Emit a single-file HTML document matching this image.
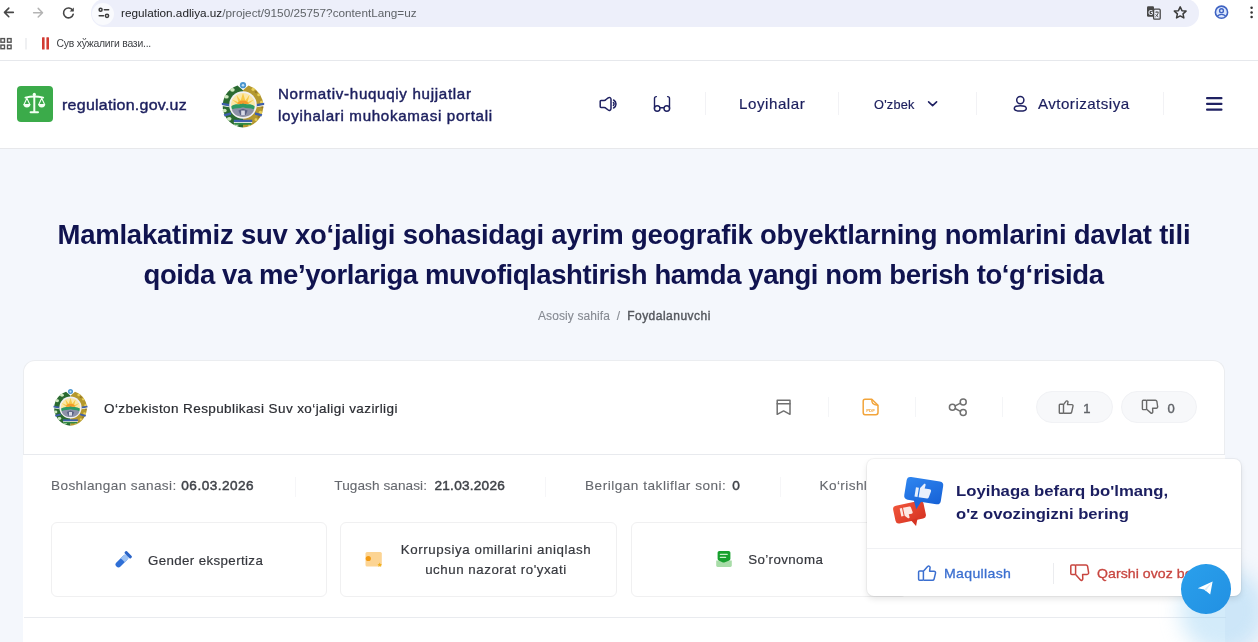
<!DOCTYPE html>
<html><head><meta charset="utf-8">
<style>
*{box-sizing:border-box;margin:0;padding:0}
html,body{width:1258px;height:642px;overflow:hidden}
body{font-family:"Liberation Sans",sans-serif;background:#f4f7fc;position:relative}
.abs{position:absolute}
.nw{white-space:nowrap}
#chrome{left:0;top:0;width:1258px;height:61px;background:#fff;border-bottom:1px solid #e6e8ec}
#omni{left:91px;top:-1px;width:1108px;height:27.5px;background:#edeffa;border-radius:13.5px}
#tune{left:92px;top:2.5px;width:22px;height:22px;border-radius:11px;background:#f9fafd}
#url{left:121px;top:6px;font-size:11.75px;color:#5f6368}
#url b{font-weight:400;color:#202124}
#bm{left:56.5px;top:37.8px;font-size:10.4px;letter-spacing:-0.22px;color:#404347}
#hdr{left:0;top:61px;width:1258px;height:88px;background:#fff;border-bottom:1px solid #e7e8eb}
#logo{left:17px;top:86px;width:36px;height:36px;border-radius:4px;background:#3bab4a}
#site{left:62px;top:95.7px;font-size:15.1px;color:#1c1f5e;-webkit-text-stroke:0.4px #1c1f5e;letter-spacing:0.24px;transform:scaleX(1.06);transform-origin:0 0}
#portal{left:277.6px;top:82.6px;font-size:14.3px;color:#1c1f5e;-webkit-text-stroke:0.42px #1c1f5e;line-height:22.5px;transform:scaleX(1.06);transform-origin:0 0}
.navt{font-size:14.3px;color:#1c1f5e;-webkit-text-stroke:0.18px #1c1f5e;transform:scaleX(1.06);transform-origin:0 0}
.vdiv{width:1px;height:23px;background:#f2f2f5;top:92px}
.title{font-size:27.5px;font-weight:700;color:#10134f;line-height:39.5px}
#crumb{left:538px;top:309px;font-size:12px;letter-spacing:0.1px;color:#868a92;-webkit-text-stroke:0.1px #868a92}
#crumb b{color:#55585e;font-weight:400;font-size:12px;letter-spacing:0.48px;-webkit-text-stroke:0.4px #55585e}
#card{left:23px;top:360px;width:1202px;height:95px;background:#fff;border-radius:12px 12px 0 0;border:1px solid #ebedf0;border-bottom:none}
#card2{left:23px;top:455px;width:1202px;height:200px;background:#fff}
#cardhead{left:23px;top:454px;width:1202px;height:1px;background:#e8eaee}
#org{left:104px;top:400.5px;font-size:13.5px;letter-spacing:0.4px;color:#2b2d33;-webkit-text-stroke:0.2px #2b2d33}
.pill{height:32px;border-radius:16px;background:#f7f8fa;border:1px solid #f1f2f5;top:391px}
.pnum{font-size:13px;color:#606368;-webkit-text-stroke:0.4px #606368;top:400.5px}
.lbl{font-size:13.6px;color:#65686e;top:478.4px;-webkit-text-stroke:0.1px #65686e}
.val{font-size:13.6px;font-weight:400;color:#3f4248;-webkit-text-stroke:0.45px #3f4248;top:478.4px}
.cat{top:522px;height:74.5px;border:1px solid #f0f0f1;border-radius:6px;background:#fff}
.catt{font-size:13.3px;color:#36383e;text-align:center;-webkit-text-stroke:0.2px #36383e}
#line617{left:24px;top:617px;width:1202px;height:1px;background:#e9ebef}
#popup{left:866.5px;top:459px;width:374.5px;height:137px;background:#fff;border-radius:7px;box-shadow:0 0 0 1px rgba(0,0,0,.04),0 3px 6px rgba(0,0,0,.1)}
#ptitle{left:956px;top:480px;font-size:15.4px;font-weight:700;color:#1b1e60;line-height:22.5px}
#phr{left:867px;top:548px;width:374px;height:1px;background:#f0f1f4}
#pvd{left:1053px;top:563px;width:1px;height:21px;background:#ebecef}
#maq{left:944.3px;top:566.2px;font-size:13.3px;letter-spacing:0.32px;color:#3b6fd0;-webkit-text-stroke:0.3px #3b6fd0;transform:scaleX(1.06);transform-origin:0 0}
#qar{left:1097px;top:566.2px;font-size:13.3px;letter-spacing:0.05px;color:#c8453f;-webkit-text-stroke:0.3px #c8453f;transform:scaleX(1.06);transform-origin:0 0}
#tg{left:1181px;top:564px;width:49.5px;height:49.5px;border-radius:50%;background:linear-gradient(135deg,#2aa0ec,#2290e2)}
#glow{left:1180px;top:568px;width:86px;height:86px;border-radius:50%;background:rgba(150,208,242,.42);filter:blur(10px)}
html{filter:blur(0.35px)}
</style></head><body>
<svg width="0" height="0" style="position:absolute">
<defs>
 <symbol id="emb" viewBox="0 0 100 100">
  <path d="M50 99A47 47 0 0 1 38 7.5L50 18Z" fill="#2a6a30"/>
  <path d="M50 99A47 47 0 0 0 62 7.5L50 18Z" fill="#b4982e"/>
  <g fill="#cfe8c0">
   <ellipse cx="27" cy="17" rx="5" ry="4"/><ellipse cx="14" cy="32" rx="5" ry="4"/>
   <ellipse cx="10" cy="62" rx="4.5" ry="4"/><ellipse cx="20" cy="80" rx="5" ry="4"/><ellipse cx="36" cy="92" rx="5" ry="3.5"/>
  </g>
  <g fill="#e8cf58">
   <circle cx="72" cy="16" r="3.5"/><circle cx="84" cy="28" r="3"/><circle cx="90" cy="44" r="3"/><circle cx="88" cy="66" r="3.5"/><circle cx="78" cy="82" r="3"/><circle cx="64" cy="93" r="3"/>
  </g>
  <g fill="#7a5c1e" opacity=".5"><circle cx="78" cy="22" r="2.5"/><circle cx="92" cy="55" r="2.5"/><circle cx="84" cy="76" r="2.5"/></g>
  <g fill="#3e5fae">
   <path d="M4 45l17 3v5l-17-3z"/><path d="M96 45l-17 3v5l17-3z"/>
   <path d="M8 70l16-4v5l-14 4z"/><path d="M92 70l-16-4v5l14 4z"/>
  </g>
  <g fill="#f2f4f8"><path d="M4 50l17 3v2l-17-3z"/><path d="M96 50l-17 3v2l17-3z"/></g>
  <circle cx="50" cy="50" r="30" fill="#f0f0f3"/>
  <circle cx="50" cy="50" r="26" fill="#fbe7a6"/>
  <path d="M50 24L55 40L64 28L60 44L74 38L62 48H38L26 38L40 44L36 28L45 40Z" fill="#f7c948"/>
  <path d="M38 48A12 8 0 0 1 62 48Z" fill="#f39a2a"/>
  <path d="M24.5 53C33 46 43 50 50 47C57 50 67 46 75.5 53L74 60H26Z" fill="#2f9a66"/>
  <path d="M26 60C34 56 43 58 50 55C57 58 66 56 74 60C72 70 62 76 50 76C38 76 28 70 26 60Z" fill="#8d91a8"/>
  <path d="M40 62L50 58L60 62L56 72H44Z" fill="#5c6384"/>
  <path d="M46 62h8v10h-8z" fill="#d9dbe6"/>
  <path d="M30 82h40v5H30z" fill="#3e5fae"/>
  <path d="M30 87h40v2H30z" fill="#f0f2f6"/>
  <path d="M32 89h36v4H32z" fill="#2f8a45"/>
  <circle cx="50" cy="7" r="6.8" fill="#4a95cf"/>
  <circle cx="50" cy="7" r="2.8" fill="#c6e2f4"/>
 </symbol>
</defs></svg>
<div id="chrome" class="abs"></div>
<div id="omni" class="abs"></div>
<div id="tune" class="abs"></div>
<svg class="abs" style="left:0;top:0" width="130" height="26" viewBox="0 0 130 26">
 <g fill="none" stroke="#474747" stroke-width="1.6" stroke-linecap="round" stroke-linejoin="round">
  <path d="M13.3 12.4H4.6M8.8 8.1L4.5 12.4L8.8 16.7"/>
 </g>
 <g fill="none" stroke="#b4b4b4" stroke-width="1.5" stroke-linecap="round" stroke-linejoin="round">
  <path d="M33.6 12.7H42.4M38.2 8.4L42.5 12.7L38.2 17"/>
 </g>
 <g fill="none" stroke="#474747" stroke-width="1.6" stroke-linecap="round">
  <path d="M72.6 10.3A4.9 4.9 0 1 0 73.2 14.2"/>
 </g>
 <path d="M73.8 7.4V11.6H69.6Z" fill="#474747"/>
 <g fill="none" stroke="#3c3c3c" stroke-width="1.5" stroke-linecap="round">
  <circle cx="100.6" cy="9.8" r="1.5"/><path d="M104.3 9.8H108.6"/>
  <circle cx="107" cy="15.8" r="1.6"/><path d="M99.2 15.8H103.5"/>
 </g>
</svg>
<div id="url" class="abs nw"><b>regulation.adliya.uz</b>/project/9150/25757?contentLang=uz</div>
<svg class="abs" style="left:1140px;top:0" width="118" height="26" viewBox="1140 0 118 26">
 <rect x="1147" y="6.2" width="7" height="10.5" rx="1.2" fill="#474747"/>
 <text x="1148.2" y="14.6" font-family="Liberation Sans" font-size="6.5" font-weight="700" fill="#edeffa">G</text>
 <rect x="1153.6" y="9.2" width="6.6" height="10" rx="1" fill="#edeffa" stroke="#474747" stroke-width="1.3"/>
 <path d="M1155.3 12.2h3.3M1156.9 11.2v1M1158.3 12.4c-.4 2-1.5 3.5-3 4.6M1155.6 14.3c.7 1 1.6 2 2.7 2.6" stroke="#474747" stroke-width=".9" fill="none"/>
 <path d="M1180.2 6.9l1.75 3.75 4.1.45-3.05 2.8.85 4.05-3.65-2.05-3.65 2.05.85-4.05-3.05-2.8 4.1-.45z" fill="none" stroke="#3c3c3c" stroke-width="1.5" stroke-linejoin="round"/>
 <circle cx="1221.5" cy="12.2" r="6.1" fill="#dce8fd" stroke="#3f63c3" stroke-width="1.6"/>
 <circle cx="1221.5" cy="10.7" r="1.9" fill="none" stroke="#3f63c3" stroke-width="1.4"/>
 <path d="M1217.3 16.3c1.2-1.3 2.5-1.9 4.2-1.9s3 .6 4.2 1.9" fill="none" stroke="#3f63c3" stroke-width="1.4"/>
 <circle cx="1251.6" cy="7.8" r="1.25" fill="#333"/><circle cx="1251.6" cy="12.4" r="1.25" fill="#333"/><circle cx="1251.6" cy="16.9" r="1.25" fill="#333"/>
</svg>
<svg class="abs" style="left:0;top:30px" width="56" height="26" viewBox="0 30 56 26">
 <g fill="none" stroke="#555" stroke-width="1.4">
  <rect x="0.9" y="38.6" width="3.6" height="3.6"/><rect x="7.5" y="38.6" width="3.6" height="3.6"/>
  <rect x="0.9" y="45.1" width="3.6" height="3.6"/><rect x="7.5" y="45.1" width="3.6" height="3.6"/>
 </g>
 <rect x="25.5" y="38" width="1" height="11.5" fill="#dfe1e5"/>
 <rect x="42" y="37.2" width="2.6" height="12.4" rx=".5" fill="#d23b33"/>
 <rect x="46.4" y="37.2" width="2.6" height="12.4" rx=".5" fill="#d23b33"/>
</svg>
<div id="bm" class="abs nw">Сув хўжалиги вази...</div>

<div id="hdr" class="abs"></div>
<div id="logo" class="abs"></div>
<svg class="abs" style="left:17px;top:86px" width="36" height="36" viewBox="17 86 36 36">
 <g fill="none" stroke="#f2fff2" stroke-linecap="round">
  <path d="M25.4 97.6Q34.3 95.4 43.2 97.6" stroke-width="1.9"/>
  <path d="M34.3 95V111.4M30.6 112.3H38" stroke-width="2"/>
  <path d="M26.9 98.2L24 104.4M26.9 98.2L29.8 104.4M41.7 98.2L38.8 104.4M41.7 98.2L44.6 104.4" stroke-width="1.1"/>
 </g>
 <circle cx="34.3" cy="94.4" r="1.6" fill="#f2fff2"/>
 <path d="M23.4 104H30.4A3.5 3.4 0 0 1 23.4 104Z" fill="#f2fff2"/>
 <path d="M38.2 104H45.2A3.5 3.4 0 0 1 38.2 104Z" fill="#f2fff2"/>
</svg>
<div id="site" class="abs nw">regulation.gov.uz</div>
<svg class="abs" style="left:219.5px;top:81.5px" width="46" height="46"><use href="#emb"/></svg>
<div id="portal" class="abs nw"><span style="letter-spacing:0.64px">Normativ-huquqiy hujjatlar</span><br><span style="letter-spacing:0.63px">loyihalari muhokamasi portali</span></div>
<svg class="abs" style="left:590px;top:85px" width="360" height="40" viewBox="590 85 360 40">
 <g fill="none" stroke="#1f2162" stroke-width="1.5" stroke-linejoin="round" stroke-linecap="round">
  <path d="M601 100.4H604.2C605 100.4 605.5 100.1 606 99.5L608.2 97.8C609.4 96.9 611 97.6 611 99.2V108.6C611 110.2 609.4 110.9 608.2 110L606 108.3C605.5 107.7 605 107.4 604.2 107.4H601C600.5 107.4 600.2 107.1 600.2 106.6V101.2C600.2 100.7 600.5 100.4 601 100.4Z"/>
  <path d="M613.4 102.6C614.3 103.3 614.3 104.7 613.4 105.4"/>
  <path d="M613.6 100C616.8 101.8 616.8 106.2 613.6 108"/>
  <path d="M656.4 96.6C655.2 96.6 654.5 97.3 654.5 98.4V108.4M667.6 96.6C668.8 96.6 669.5 97.3 669.5 98.4V108.4" stroke-width="1.4"/>
  <circle cx="657.2" cy="108.5" r="2.8" stroke-width="1.4"/><circle cx="666.8" cy="108.5" r="2.8" stroke-width="1.4"/>
  <path d="M660 107.7H664" stroke-width="1.4"/>
  <path d="M928.6 101.8L932.6 105.6L936.6 101.8" stroke-width="1.6"/>
 </g>
</svg>
<svg class="abs" style="left:1000px;top:85px" width="240" height="40" viewBox="1000 85 240 40">
 <g fill="none" stroke="#1f2162" stroke-width="1.5">
  <circle cx="1020.3" cy="100.1" r="3.6"/>
  <ellipse cx="1020.3" cy="108.4" rx="6" ry="2.6"/>
 </g>
 <g fill="#1f2162">
  <rect x="1206" y="97" width="16.5" height="2.2" rx="1"/>
  <rect x="1206" y="102.8" width="16.5" height="2.2" rx="1"/>
  <rect x="1206" y="108.6" width="16.5" height="2.2" rx="1"/>
 </g>
</svg>
<div class="abs vdiv" style="left:705px"></div>
<div class="abs vdiv" style="left:838px"></div>
<div class="abs vdiv" style="left:976px"></div>
<div class="abs vdiv" style="left:1163px"></div>
<div class="abs nw navt" style="left:738.6px;top:96.3px;letter-spacing:0.5px">Loyihalar</div>
<div class="abs nw navt" style="left:873.5px;top:98px;font-size:12px;letter-spacing:0.22px">O'zbek</div>
<div class="abs nw navt" style="left:1037.5px;top:95.8px;letter-spacing:0.43px">Avtorizatsiya</div>

<div id="t1" class="abs nw title" style="left:57.5px;top:215.2px;letter-spacing:-0.236px">Mamlakatimiz suv xo‘jaligi sohasidagi ayrim geografik obyektlarning nomlarini davlat tili</div>
<div id="t2" class="abs nw title" style="left:143.5px;top:254.9px;letter-spacing:-0.407px">qoida va me’yorlariga muvofiqlashtirish hamda yangi nom berish to‘g‘risida</div>
<div id="crumb" class="abs nw">Asosiy sahifa &nbsp;/&nbsp; <b>Foydalanuvchi</b></div>

<div id="card" class="abs"></div>
<div id="card2" class="abs"></div>
<div id="cardhead" class="abs"></div>
<svg class="abs" style="left:52px;top:389px" width="37" height="37"><use href="#emb"/></svg>
<div id="org" class="abs nw">O‘zbekiston Respublikasi Suv xo‘jaligi vazirligi</div>
<div class="abs pill" style="left:1036px;width:77px"></div>
<div class="abs pill" style="left:1121px;width:76px"></div>
<svg class="abs" style="left:760px;top:385px" width="430" height="45" viewBox="760 385 430 45">
 <g fill="none" stroke="#707070" stroke-width="1.5" stroke-linejoin="round" stroke-linecap="round">
  <path d="M777.2 400.2H790V414.3L783.6 410.9L777.2 414.3Z"/>
  <path d="M777.2 403.8H790"/>
  <circle cx="963.2" cy="401.9" r="3"/><circle cx="952.4" cy="407.2" r="3"/><circle cx="963.2" cy="412.6" r="3"/>
  <path d="M955.1 405.9L960.5 403.2M955.1 408.5L960.5 411.3"/>
 </g>
 <g fill="none" stroke="#f2a43a" stroke-width="1.5" stroke-linejoin="round">
  <path d="M865 399.2H871.8L878 405.2V412.6C878 414 877 414.8 875.8 414.8H865C863.8 414.8 863.2 414 863.2 412.6V401.2C863.2 400 863.8 399.2 865 399.2Z"/>
  <path d="M871.8 399.5C871.8 403 872.6 405 877.8 405.2"/>
 </g>
 <text x="866.2" y="411.6" font-family="Liberation Sans" font-size="4.3" font-weight="700" fill="#f2a43a">PDF</text>
 <g fill="none" stroke="#6a6a6a" stroke-width="1.4" stroke-linejoin="round">
  <rect x="1059.3" y="404.3" width="4.2" height="9" rx=".8"/>
  <path d="M1063.5 404.6L1065.9 401.4C1066.4 400.6 1067.7 400.7 1068 401.8L1067.5 404.6H1071.9C1072.7 404.6 1073.2 405.3 1073 406.1L1071.6 412.3C1071.4 413 1070.9 413.3 1070.2 413.3H1063.5"/>
  <rect x="1142.4" y="400.3" width="4.2" height="9.3" rx=".8"/>
  <path d="M1146.6 400.3H1155.4C1156.2 400.3 1156.7 400.8 1156.9 401.5L1157.6 406.5C1157.8 407.3 1157.2 408.3 1156.3 408.3H1152.6L1152.8 411.8C1152.8 413.1 1151.6 413.6 1150.8 412.9L1146.6 409.2"/>
 </g>
</svg>
<div class="abs" style="left:827.5px;top:397px;width:1px;height:20px;background:#f4f5f7"></div><div class="abs" style="left:914.5px;top:397px;width:1px;height:20px;background:#f4f5f7"></div><div class="abs" style="left:1001.5px;top:397px;width:1px;height:20px;background:#f4f5f7"></div>

<div class="abs nw pnum" style="left:1083.3px">1</div>
<div class="abs nw pnum" style="left:1167.5px">0</div>

<div class="abs nw lbl" style="left:51px;letter-spacing:0.384px">Boshlangan sanasi:</div>
<div class="abs nw val" style="left:181.3px;letter-spacing:0.481px">06.03.2026</div>
<div class="abs" style="left:295px;top:477px;width:1px;height:20px;background:#f6f6f8"></div>
<div class="abs nw lbl" style="left:334.3px;letter-spacing:0.076px">Tugash sanasi:</div>
<div class="abs nw val" style="left:434.5px;letter-spacing:0.247px">21.03.2026</div>
<div class="abs" style="left:545px;top:477px;width:1px;height:20px;background:#f6f6f8"></div>
<div class="abs nw lbl" style="left:585px;letter-spacing:0.508px">Berilgan takliflar soni:</div>
<div class="abs nw val" style="left:732.2px">0</div>
<div class="abs" style="left:780px;top:477px;width:1px;height:20px;background:#f6f6f8"></div>
<div class="abs nw lbl" style="left:819.5px;letter-spacing:0.4px">Ko‘rishlar soni:</div>

<div class="abs cat" style="left:51px;width:276px"></div>
<div class="abs cat" style="left:340px;width:277px"></div>
<div class="abs cat" style="left:631px;width:276px"></div>
<svg class="abs" style="left:110px;top:545px" width="280" height="28" viewBox="110 545 280 28">
 <g transform="rotate(45 123.5 559.5)">
  <rect x="120.6" y="554.5" width="5.8" height="15" rx="2.9" fill="#2f6fd6"/>
  <rect x="120.6" y="554.5" width="5.8" height="6" fill="#9cc2f4"/>
  <rect x="119.2" y="551.3" width="8.6" height="3" rx="1" fill="#2a64c8"/>
 </g>
 <rect x="365.5" y="552" width="16.3" height="14.5" rx="1.5" fill="#fcd493"/>
 <circle cx="368.3" cy="558.5" r="2.6" fill="#f39a12"/>
 <path d="M379.7 562.6l.7 1.4 1.5.2-1.1 1 .3 1.5-1.4-.7-1.4.7.3-1.5-1.1-1 1.5-.2z" fill="#f0b11e"/>
</svg>
<svg class="abs" style="left:712px;top:547px" width="24" height="24" viewBox="712 547 24 24">
 <path d="M716.2 560.4H731.8V565.6C731.8 566.4 731.2 567 730.4 567H717.6C716.8 567 716.2 566.4 716.2 565.6Z" fill="#a8dca8"/>
 <path d="M719.4 551H728.6C729.6 551 730.4 551.8 730.4 552.8V558.8C730.4 559.6 730 560.1 729.3 560.5L724.3 562.4C723.8 562.6 723.4 562.6 722.9 562.4L718.7 560.5C718 560.1 717.6 559.6 717.6 558.8V552.8C717.6 551.8 718.4 551 719.4 551Z" fill="#17a02e"/>
 <path d="M720.4 554.4H727.2M720.4 557.4H725.6" stroke="#c8f0c8" stroke-width="1.3" stroke-linecap="round"/>
</svg>
<div class="abs nw catt" style="left:148px;top:552.6px;letter-spacing:0.384px">Gender ekspertiza</div>
<div class="abs nw catt" style="left:380px;top:540.4px;width:232px;line-height:19.8px"><span style="letter-spacing:0.585px">Korrupsiya omillarini aniqlash</span><br><span style="letter-spacing:0.542px">uchun nazorat ro'yxati</span></div>
<div class="abs nw catt" style="left:748.2px;top:552.3px;letter-spacing:0.405px">So’rovnoma</div>
<div id="line617" class="abs"></div>

<div id="glow" class="abs"></div>
<div id="popup" class="abs"></div>
<svg class="abs" style="left:885px;top:468px" width="65" height="65" viewBox="885 468 65 65">
 <defs>
  <linearGradient id="gb" x1="0" y1="0" x2="1" y2="1"><stop offset="0" stop-color="#2f86f0"/><stop offset="1" stop-color="#1661d6"/></linearGradient>
  <linearGradient id="gr" x1="0" y1="0" x2="1" y2="1"><stop offset="0" stop-color="#f0553a"/><stop offset="1" stop-color="#d63322"/></linearGradient>
 </defs>
 <g transform="rotate(-12 910 512)">
  <rect x="894" y="503" width="31" height="18" rx="3.5" fill="url(#gr)"/>
  <path d="M909 520L913 527L916 520Z" fill="#d63322"/>
  <path d="M904 506.5h6.5c.8 0 1.3.5 1.4 1.2l.7 4.8c.1.8-.5 1.5-1.3 1.5h-3l.2 2.8c0 1-1 1.4-1.7.8L904 514.5z M900.6 506.5h2.4v8h-2.4z" fill="#fde8e2"/>
 </g>
 <g transform="rotate(9 923 492)">
  <rect x="905" y="479" width="37" height="23" rx="4" fill="url(#gb)"/>
  <path d="M915 501L919 510L923 501Z" fill="#1a66da"/>
  <path d="M919.5 488.5l3-4.3c.6-.9 2-.6 2 .5l-.4 3.6h5.2c1 0 1.7.9 1.5 1.9l-1.3 6.4c-.2.7-.8 1.2-1.5 1.2h-8.5z M915.3 488.5h3v9.3h-3z" fill="#e8f0fc"/>
 </g>
</svg>
<div id="ptitle" class="abs nw"><span style="display:inline-block;transform:scaleX(1.087);transform-origin:0 0">Loyihaga befarq bo'lmang,</span><br><span style="display:inline-block;transform:scaleX(1.08);transform-origin:0 0">o'z ovozingizni bering</span></div>
<div id="phr" class="abs"></div>
<div id="pvd" class="abs"></div>
<svg class="abs" style="left:912px;top:560px" width="185" height="26" viewBox="912 560 185 26">
 <g fill="none" stroke="#3b6fd0" stroke-width="1.5" stroke-linejoin="round">
  <rect x="918.6" y="571" width="4.8" height="9.3" rx="1"/>
  <path d="M923.4 571.3L927.6 566.6C928.4 565.6 930 566 930.1 567.4L929.6 571.2H934C935 571.2 935.7 572.1 935.5 573.1L934.1 579C933.9 579.8 933.3 580.3 932.5 580.3H923.4"/>
 </g>
 <g fill="none" stroke="#c8453f" stroke-width="1.5" stroke-linejoin="round">
  <rect x="1070.8" y="565" width="4.8" height="9.5" rx="1"/>
  <path d="M1075.6 565H1086C1086.8 565 1087.4 565.6 1087.6 566.3L1088.6 572.6C1088.8 573.6 1088 574.4 1087.1 574.4H1082.6L1082.8 578.8C1082.8 580.2 1081.4 580.8 1080.5 580L1075.6 574.5"/>
 </g>
</svg>
<div id="maq" class="abs nw">Maqullash</div>
<div id="qar" class="abs nw">Qarshi ovoz bering</div>
<div id="tg" class="abs"></div>
<svg class="abs" style="left:1190px;top:573px" width="30" height="30" viewBox="1190 573 30 30">
 <path d="M1212.6 581.6L1197.8 588.3L1204.2 589.6L1210.2 594.6Z" fill="#fff"/>
 <path d="M1204.2 589.6L1212.6 581.6L1205.6 591.2Z" fill="#d8ebfa"/>
</svg>
</body></html>
